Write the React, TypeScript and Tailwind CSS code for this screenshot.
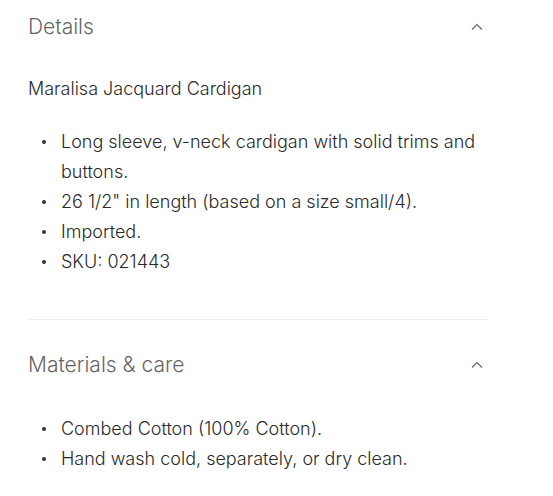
const details = [
  'Long sleeve, v-neck cardigan with solid trims and buttons.',
  '26 1/2" in length (based on a size small/4).',
  'Imported.',
  'SKU: 021443',
];

const care = ['Combed Cotton (100% Cotton).', 'Hand wash cold, separately, or dry clean.'];

function Caret() {
  return (
    <svg width="12" height="8" viewBox="0 0 12 8" fill="none" className="text-[#666]">
      <path d="M1 6.5L6 1.5L11 6.5" stroke="currentColor" strokeWidth="1.2" />
    </svg>
  );
}

function BulletList({ items }: { items: string[] }) {
  return (
    <ul className="pl-[14px]">
      {items.map((item) => (
        <li key={item} className="flex leading-[30px]">
          <span className="w-[19px] shrink-0 flex items-start pt-[13px]">
            <span className="block w-[4px] h-[4px] rounded-full bg-[#333]" />
          </span>
          <span>{item}</span>
        </li>
      ))}
    </ul>
  );
}

export default function App() {
  return (
    <div className="bg-white w-[553px] h-[496px] font-['Inter',sans-serif] font-[350] text-[#2b2b2b] overflow-hidden">
      <div className="w-[460px] ml-[28px]">
        {/* Details */}
        <section className="pb-[42px] border-b border-[#ececec]">
          <div className="flex items-center justify-between h-[54px] pr-[5px]">
            <h2 className="text-[21px] text-[#666] font-light">Details</h2>
            <Caret />
          </div>
          <p className="text-[18px] mt-[22px] leading-[26px]">Maralisa Jacquard Cardigan</p>
          <div className="text-[18px] mt-[25px]">
            <BulletList items={details} />
          </div>
        </section>

        {/* Materials & care */}
        <section>
          <div className="flex items-center justify-between h-[54px] mt-[18px] pr-[5px]">
            <h2 className="text-[21px] text-[#666] font-light">Materials &amp; care</h2>
            <Caret />
          </div>
          <div className="text-[18px] mt-[22px]">
            <BulletList items={care} />
          </div>
        </section>
      </div>
    </div>
  );
}
